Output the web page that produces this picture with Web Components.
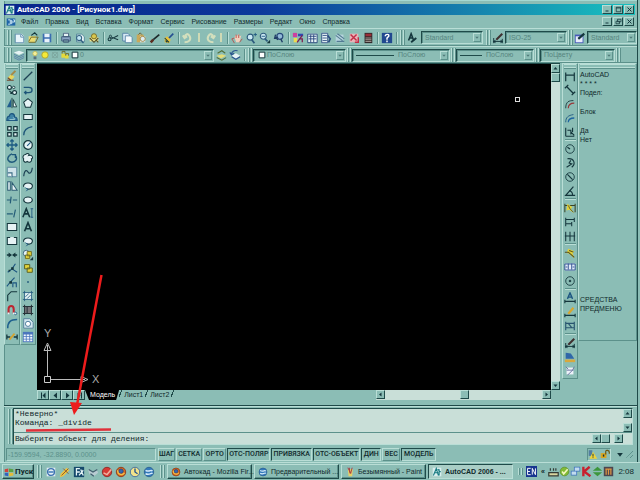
<!DOCTYPE html>
<html lang="ru">
<head>
<meta charset="utf-8">
<title>AutoCAD 2006 - [Рисунок1.dwg]</title>
<style>
  html, body { height: 100%; margin: 0; }
  body {
    --face: #8bbdb5; --light: #b9ded6; --dark: #1f4a49; --mid: #5c918b; --paper: #c9dfd8; --ink: #10292b;
    background: var(--face); color: var(--ink); overflow: hidden;
    font: 7px/10px "Liberation Sans", Arial, sans-serif;
  }
</style>
</head>
<body>
<cad-desktop></cad-desktop>
<script>
const K = '#14363c', B = '#1c5580', W = '#e6f3f5', Y = '#e2d23a';
const s = (d, c = K, w = 1, f = 'none') => `<path d="${d}" fill="${f}" stroke="${c}" stroke-width="${w}"/>`;
const f = (d, c) => `<path d="${d}" fill="${c}"/>`;
const c = (x, y, r, fill = 'none', st = K, w = 1) => `<circle cx="${x}" cy="${y}" r="${r}" fill="${fill}" stroke="${st}" stroke-width="${w}"/>`;
const page = s('M3 2.5h6l3 3v6H3z', '#4a7f94', 1, '#f2fafa');
const disc = (a, b, e) => c(7, 7, 5.5, a, b, 1) + e;
const ICONS = {
  app: f('M1 1h12v12H1z', '#d8eeee') + s('M2 12L6 2l3 10M3 8h6M10 3v9M8 3l4 4', '#167a80', 1.5),
  doc: f('M1 2h12v10H1z', '#1f65a8') + s('M3 4h3v6H3M8 4v6M10 4h2v3h-4', '#d8f0f8', 1.3),
  new: f('M3 2h7l3 3v8H3z', '#e9f5fb') + s('M2.5 2.5h7l3 3v7h-10z M9 3v3h3', '#5687a8'),
  open: f('M2 5h9l-2 7H2z', '#eadb72') + s('M2 11l3-5h8l-3 6H2', '#6b6422') + s('M5 4l4-3 3 3', K, 1.3),
  save: f('M2 2h10v10H2z', '#3b6db0') + f('M4 2h6v4H4zM4 8h6v4H4z', '#e8f2fa'),
  print: f('M4 1h6v5H4z', W) + f('M2 5h10v5H2z', '#8ba6c5') + s('M4 1.5h6v4H4zM2 5.5h10v5H2zM4 9h6v3H4z', '#3c5575'),
  preview: page + c(6, 7, 3, '#bfe6f4', '#315f80', 1.2) + s('M8 9l3 4', '#315f80', 1.6),
  publish: f('M2 6h10v5H2z', '#efe48a') + c(7, 5, 3, '#d9c850', '#72641f') + s('M2 7l5 5 5-5M9 9l3 3', '#54502a', 1.3),
  cut: s('M5 8L13 4M5 6l8 3', K, 1.2) + c(3, 8.5, 1.7, 'none', K, 1.2) + c(4, 5, 1.3, 'none', K, 1),
  copyclip: s('M2 1.5h6l2 2v7H2z', '#4f7ea3', 1, '#d6e9f5') + s('M5 4.5h6l2 2v6H5z', '#4f7ea3', 1, '#f4fafd'),
  paste: f('M2 3h8v9H2z', '#c9a95a') + s('M4 3l2-2 2 2', '#6c5220') + f('M6 5h6v7H6z', '#dcecf3') + c(9, 8, 3, 'none', '#a08238'),
  brush: s('M2 12l3-3', '#5b2d20', 3) + s('M5 9l7-6', '#1d2a2c', 2),
  brush2: f('M2 7l3-2 4 4-2 4-5-1z', '#e6c13a') + s('M7 7l5-5', '#264e90', 2) + s('M2 7l5 5M3 10l2 2', K, 1.2),
  undo: s('M3 12c5 0 8-3 6-7S4 2 3 6M1 4l2 3 3-2', '#d3dfbd', 2.4),
  redo: s('M11 12c-5 0-8-3-6-7s5-3 6 1M13 4l-2 3-3-2', '#d3dfbd', 2.4),
  pan: f('M4 6l2-3 1 2 2-3 1 3 2-1-2 8H6z', '#f1d0bd') + s('M4 13l-3-5 3-1M6 3v4M9 3v4M10 12l3-4', '#b84a45', 1),
  zoomrt: c(6, 6, 3.5, '#c9e8f2', '#2d5a7d', 1.3) + s('M8 9l3 4', '#2d5a7d', 2) + s('M10 3h4M12 1v4', B, 1),
  zoomwin: c(5, 5, 3.5, '#c9e8f2', '#2d5a7d', 1.3) + s('M7 8l3 3', '#2d5a7d', 2) + f('M13 9v4H9z', K) + s('M3 5h4', B),
  zoomprev: c(8, 5, 3.5, '#93bbd8', '#28497a', 1.4) + s('M9 8l2 4M2 6l4 3M3 3l-1 4 4-1', '#203c66', 1.6),
  props: f('M1 1h5v5H1z', '#cc3fa0') + f('M7 2h6v3H7z', '#3048b0') + f('M2 7h4v5H2z', '#ecdc50') + s('M6 12l6-8M8 8h4v4', '#802050', 1.5) ,
  dcenter: f('M2 2h11v10H2z', W) + s('M2 2.5h11v10H2zM3 5h9M3 8h9M5.5 3v9M9 3v9', '#24407a', 1),
  palettes: f('M2 1h7v12H2z', W) + s('M2 1.5h7v11H2zM3 4h5M3 7h5M3 10h5', '#27487f', 1) + s('M9 4l3 4-2 4', '#27487f', 1.8),
  sheets: f('M2 3h9v9H2z', '#b6d4de') + s('M2 4l8 6M4 2l8 6M3 11h9', '#537b92', 1.3),
  markup: f('M2 2h10v10H2z', '#e7b4b8') + s('M3 3l7 7M10 3l-7 7M8 12h4V6', '#c22d48', 1.7),
  calc: f('M3 1h9v12H3z', '#33292b') + f('M4 2h7v3H4z', '#9a2f38') + s('M4 7h7M4 9h7M4 11h7', '#b5aaa3', 1) ,
  help: f('M1 1h12v12H1z', '#20488f') + s('M5 5c0-3 5-3 4 0L7 7v2M7 10v2', '#fff', 1.7),
  style: s('M3 10L6 2l3 8M4 7h4', K, 1.8) + s('M6 12l6-5', K, 2.2),
  dimstyle: s('M2 7v6M12 8v5M2 11h10', K, 1.1) + s('M5 9l7-7', '#3f3030', 2.4) + f('M1 11l3-2v4zM13 11l-3-2v4z', K),
  tabstyle: f('M1 3h10v10H1z', '#4659b8') + f('M2 5h8v7H2z', '#e7ecfb') + s('M5 8l7-6', K, 2.6),
  layers: f('M1 4l6-2 6 2-6 3z', W) + s('M1 6l6 3 6-3M1 8l6 3 6-3M1 10l6 3 6-3', '#557fa6', 1),
  bulb: c(7, 5, 3, '#f2ee9b', '#c9bd4c') + f('M5 9h4v4H5z', '#58717a'),
  sun: c(7, 7, 4.5, '#f4ea38', '#a8a02c', 1.2),
  freeze: c(7, 7, 4, 'none', '#79a29a') + s('M3 3l8 8M11 3l-8 8', '#79a29a'),
  lock: f('M2 5h6v6H2zM7 7h5v5H7z', '#e4da3c') + s('M3 5V2h4v3M8 8V5h4v3', '#6c671f', 1.2),
  square: s('M3 3h8v8H3z', K, 1.4, '#fff'),
  layprev: f('M2 8l6-2 5 2-6 3z', '#e4dc78') + s('M2 10l6 3 5-3M3 5l5-3 4 3', '#506e38', 1.2),
  layback: f('M3 8l5-3 5 3-5 4z', W) + s('M3 9l5 3 5-3M10 2c-4-1-7 1-7 4M1 4l2 3 3-2', '#29558d', 1.4),
  erase: f('M2 9l4-4 4 3-4 4z', '#e9d55d') + s('M6 6l5-5', '#a58a48', 2.4) + s('M1 12h8M2 9l4 3', '#73472e', 1.2),
  copy: c(4, 4, 2.3, W, K, 1.3) + c(9, 4, 1.4, W) + c(10, 10, 2.3, W, K, 1.3) + s('M4 8l3 3M5 11h2V9', K, 1.2),
  mirror: f('M6 2v10H1z', '#215d8d') + s('M8.5 3v8.5h4z', K, 1, W) + s('M7 1v12', K, 1),
  offset: s('M1 11h12c0-3-2-4-3-4 0-5-6-5-6-1-2 0-3 2-3 5z', B, 1.4, '#3f84a7') + s('M4 10h6c0-2-1-2-2-2', '#a9d5dc', 1),
  array: s('M2 2h4v4H2zM9 2h4v4H9zM2 9h4v4H2zM9 9h4v4H9z', K, 1.4, W),
  move: s('M7 1v12M1 7h12M5 3l2-2 2 2M5 11l2 2 2-2M3 5L1 7l2 2M11 5l2 2-2 2', '#1c5b83', 1.5),
  rotate: s('M4 4c-4 4-1 8 3 8s7-4 4-8M7 3h4v4M4 4l3-2', '#1d587b', 1.6),
  scale: s('M1.5 1.5h11v11h-11z', '#4f7f96', 1, '#cfe3ea') + s('M2 8h5v5', '#3a6b84', 1.3, '#f4fafa'),
  stretch: s('M2 12V2h3v10zM7 3v9h6z', '#2d5c73', 1.2, W),
  trim: s('M1 7h4M6 3L5 11M8 7h5', '#255d78', 1.4), extend: s('M1 8h7M11 3l-2 9', '#255d78', 1.4),
  breakpt: s('M1.5 3h11v8h-11z', K, 1.2, W), break: s('M5 3H1.5v8h11V3H9', K, 1.2, W) + s('M5 3h4', W, 1),
  join: s('M1 7h4M9 7h4', K, 1.8) + f('M3 4l4 3-4 3zM11 4L7 7l4 3z', K),
  pl1: s('M2 12l5-4M7 8l4-6M7 8l6 4', B, 1.3) + f('M6 6h3v3H6zM3 9h2v2H3z', K),
  pl2: s('M1 12l4-5 5-5M8 13V8h4v5', B, 1.3) + f('M4 6h3v3H4z', K),
  chamfer: s('M2 13V6l4-4h7', K, 1.3), magnet: s('M3 11V6c0-5 6-5 6 0v5', '#bd2530', 2.4) + c(11, 11, 1.5, '#e9f2f2', B) + f('M2 10h2v2H2zM8 10h2v2H8z', W),
  fillet: s('M2 13c0-7 3-10 11-10', '#1e608e', 1.8), explode: s('M1 4v6M13 4v6M1 7h4M9 7h4', K, 1.5) + s('M4 10l6-7', '#d4a22d', 2),
  line: s('M2 12L12 2', '#1d4154', 1.5), pline: s('M2 4h6c5 0 5 6 0 6H3M5 8l-2 2 2 2', '#1d5478', 1.5),
  polygon: s('M7 2l5 4-2 6H4L2 6z', K, 1.2, W), rect: s('M2 4h10v6H2z', K, 1.2, W), arc: s('M2 12c0-6 4-9 10-10', '#1d5478', 1.5),
  circle: c(7, 7, 5, W, K, 1.4) + s('M6 8l4-4', B, 1.2), cloud: s('M4 3c3-3 5 0 4 1 5-1 5 4 3 4 1 4-3 5-5 3-2 2-5 0-4-3-2-2 0-5 2-5z', K, 1.2, W),
  spline: s('M2 12c1-9 4-7 5-5s4 3 5-5', '#1d4154', 1.4), ellipse: `<ellipse cx="7" cy="7" rx="5" ry="3.5" fill="${W}" stroke="${K}" stroke-width="1.4"/>`,
  ellarc: s('M2 8c-2-6 12-6 10 0-1 3-5 3-6 2', K, 1.3, W) + s('M4 9l3 2-2 2', B, 1.1),
  mtext: s('M1 12L5 2l4 10M2.5 8h5', K, 1.8) + s('M10 2h3M11.5 2v10M10 12h3', B, 1), text: s('M3 12L7 2l4 10M4 9h6', K, 1.9),
  block: c(5, 5, 3.5, W, '#315a71') + f('M6 3h5v5H6zM4 7h5v5H4z', Y) + s('M6 3h5v5H6zM4 7h5v4H4z', '#6b661f', 1) + f('M13 9v4H9z', K),
  block2: s('M3 3h6v5H3zM6 7h6v5H6z', '#59601f', 1.1, Y), point: f('M6 6h2v2H6z', '#1d5478'),
  hatch: f('M3 3h8v8H3z', W) + s('M3 1v12M11 1v12M1 3h12M1 11h12M4 8l4-4M6 10l4-4', '#235a80', 1), grad: f('M3 3h8v8H3z', '#77767b') + s('M3 1v12M11 1v12M1 3h12M1 11h12M6 3v8', '#263238', 1.2),
  region: s('M2 2h7l4 4v7H2z', '#4d7894', 1, '#d2e6ef') + c(7, 8, 3, '#fff', '#376c91'), table: f('M1 1h12v12H1z', '#4c76bd') + s('M2 5h10M2 8h10M2 11h10', '#f0f6fd', 2) + s('M5 3v9M9 3v9', '#4c76bd'),
  dlin: s('M2 3v10M12 3v10M2 6h10', K, 1.4), dali: s('M3 3l8 8M1 5l4-4M9 13l4-4', K, 1.5), darc: s('M2 12C2 4 6 3 11 3', K, 1) + s('M5 12c0-4 3-6 7-6', '#99383b', 1.4),
  djog: s('M2 12c0-6 3-8 9-9', B, 1) + s('M5 12c0-4 3-5 7-5', '#1e65a0', 1.5), dord: s('M2 2v10M2 12h10M4 5h4v5M8 7l4 4M10 2v5', K, 1.3),
  drad: c(7, 7, 5) + s('M7 7L4 5', K, 1.5), djr: s('M4 2c8-1 10 6 5 10M8 4L6 7l3 1-6 4', K, 1.3), ddia: c(7, 7, 5) + s('M4 4l6 6', K, 1.4), dang: s('M11 2L2 12h11M6 7c3 0 4 2 4 5', K, 1.4),
  quick: s('M1 2v10M13 2v10M1 4h12', '#3a4426', 1.2) + f('M4 2l6 4-2 2 4 5-6-4-3 1z', Y) + s('M5 4l2 4 4 4', '#524e22', 1), base: s('M2 2v10M2 4h10M2 9h7M12 2v5M9 7v5', K, 1.2), cont: s('M2 2v11M7 2v11M12 2v11M1 7h12', K, 1.2),
  leader: f('M5 2l7 3-2 2 2 6-6-5-3-1z', Y) + s('M1 6h4l7 6M6 4l5 2', '#524e22', 1.2), tol: f('M1 3h12v8H1z', '#e2ebf7') + s('M1 3.5h12v7H1zM5 3v7M9 3v7M2 7h2M10 7h2', '#315295', 1.1), center: c(7, 7, 5) + c(7, 7, 1, K),
  dedit: s('M4 8l3-7 3 7M5 6h4', B, 1.6) + s('M1 9v4M13 9v4M1 11h12', K, 1.3), dtedit: s('M5 9l6-7', '#d8a72f', 2.6) + s('M1 9v4M13 9v4M1 11h12', K, 1.3), dupd: s('M2 2v10M12 2v10M2 4h10M2 9h10M5 4l4 5', '#28556f', 1.3),
  layer3: f('M2 2l6 1 4 6H2z', '#2f67a8') + f('M1 10h12v3H1z', '#d7a83d'), dst: f('M3 3h8v8H3z', '#eef2fa') + s('M2 2l3 3M12 2l-2 4M4 12l6-6M3 6h8', '#68749f', 1.1),
  win: f('M1 3l5-1v5H1z', '#d0443c') + f('M7 2l6 1v4H7z', '#5aa346') + f('M1 8h5v5l-5-1z', '#3462bd') + f('M7 8h6v4l-6 1z', '#e4bd3a'),
  ie: f('M2 2h10v10H2z', '#e4eef6') + c(7, 7, 4, 'none', '#3c72b0', 1.6) + s('M4 7h6', '#2468b0', 1.5), pen: f('M2 9l7-7 3 3-7 7-4 1z', '#edc340') + s('M3 11l8-8M5 3l6 6', '#844f2a', 1), fl: f('M1 1h12v12H1z', '#15496b') + s('M4 11V3h4M4 7h4M9 4l3 7M7 11l5-6', '#e4f3f6', 1.5),
  cam: f('M1 4l6 2 4-2 2 4-5 4-5-2z', '#b8cbd2') + s('M2 4l5 3 5-3M4 9l4 3', '#41616f', 1.5), red: disc('#d63b35', '#8e2623', s('M3 8l4 2 5-6', '#f1b1a0', 1.8)), fox: disc('#d66a21', '#8b3514', c(7, 6, 2.5, '#3867ae', '#244987') + s('M3 5c0 6 6 6 8 3', '#f2c14a', 1.5)),
  clock: disc('#f2e38b', '#39649a', s('M7 3v4l3 2', '#26578c', 1.6)), globe: disc('#327abb', '#2b5f91', s('M3 5c5 3 6-2 8 1M3 9c5 2 7-2 8 0', '#d6eafa', 1.7)), paint: f('M4 3h7l-1 10H5z', '#e7d166') + s('M4 1l4 8M10 1L8 9M6 1l1 8', '#a63843', 1.3),
  lang: f('M0 0h14v14H0z', '#17358f') + s('M6 3H2v8h4M2 7h3M8 11V3l4 8V3', '#fff', 1.2), tray1: f('M1 8h12v5H1z', '#d9d6a0') + s('M1 8.5h12v4H1zM3 6v-3M7 6V3M10 6V3', '#333b35', 1.5), icq: disc('#83bb35', '#5e922d', s('M4 7l2 3 5-6', '#f3f7c0', 2)), net: f('M5 1h8v6H5zM1 6h8v6H1z', '#3d74ba') + f('M6 2h6v4H6zM2 7h6v4H2z', '#c1dbef'),
  kav: s('M3 1v12M11 1L4 7l8 6', '#c9202d', 3), updown: f('M1 6l6-5 6 5zM1 8h12l-6 5z', '#3d963c'), tray6: f('M1 1h12v12H1z', '#4c4650') + s('M3 4h8M4 4v7M10 4v7M7 4v7', '#e29640', 1.5),
  warn: f('M1 1h5v8H1z', '#527da0') + f('M7 3l6 10H2z', '#f0d338') + s('M7 6v4M7 11v1', K, 1.3), unlock: f('M1 5h8v7H1z', '#d8a722') + s('M8 7V3c0-3 5-2 5 1v2', '#6f5711', 1.7) + f('M4 7h2v3H4z', K),
  min: f('M3 9h6v2H3z', K), max: s('M2.5 2.5h9v9h-9zM2 4h10', K, 1.5), restore: s('M5 2.5h7v5H5zM2 6.5h7v5H2z', K, 1.5), close: s('M3 3l8 8M11 3l-8 8', K, 2),
  up: f('M3 9l4-5 4 5z', K), down: f('M3 5l4 5 4-5z', K), left: f('M9 3L4 7l5 4z', K), right: f('M5 3l5 4-5 4z', K), first: f('M11 1L5 7l6 6zM2 1h2v12H2z', K), last: f('M3 1l6 6-6 6zM10 1h2v12h-2z', K), prev: f('M10 1L3 7l7 6z', K), next: f('M4 1l7 6-7 6z', K)
};

const define = (name, css, html) => customElements.define(name, class extends HTMLElement {
  connectedCallback() {
    if (this.shadowRoot) return;
    const t = document.createElement('template');
    t.innerHTML = `<style>*{box-sizing:border-box} button{font:inherit;color:inherit;margin:0;padding:0;border:0;background:none;border-radius:0} ${css}</style>` + (typeof html === 'function' ? html(this) : html);
    this.attachShadow({ mode: 'open' }).append(t.content.cloneNode(true));
  }
});
const icon = n => `<svg viewBox="0 0 14 14" aria-hidden="true">${ICONS[n] || ''}</svg>`;
const tools = list => list.split(' ').map(n => n === '|' ? '<i class="sep"></i>' : n === 'v' ? '<i class="drop"></i>' : `<cad-tool name="${n}"></cad-tool>`).join('');

define('cad-icon', ':host{display:inline-flex;flex:none;width:11px;height:11px} svg{width:100%;height:100%}', e => icon(e.getAttribute('name')));
define('cad-tool', ':host{display:flex;flex:none;width:14px;height:14px} button{display:flex;width:100%;height:100%;align-items:center;justify-content:center} svg{flex:none;width:12px;height:12px}',
  e => `<button type="button" aria-label="${e.getAttribute('name')}">${icon(e.getAttribute('name'))}</button>`);
define('bevel-button', `:host{display:flex;flex:none;width:9px;height:9px} button{display:flex;width:100%;height:100%;align-items:center;justify-content:center;background:var(--face);border:1px solid;border-color:var(--light) var(--dark) var(--dark) var(--light)} svg{flex:none;width:7px;height:7px}`,
  e => `<button type="button" aria-label="${e.getAttribute('name')}">${icon(e.getAttribute('name'))}</button>`);
define('bar-grip', ':host{display:block;flex:none;width:4px;align-self:stretch;margin:1px 1px;border:solid var(--light);border-width:0 1px;box-shadow:1px 0 var(--mid),inset 1px 0 var(--mid)}', '');

define('title-bar', `:host{display:flex;align-items:center;height:11px;padding-right:1px;color:#fff;background:linear-gradient(90deg,#08258b 0%,#0b389b 40%,#1684ae 75%,#18c2c0 100%);font:bold 8px/10px Roboto,"Liberation Sans",sans-serif}
  cad-icon{margin:0 2px 0 1px;width:10px;height:10px} h1{font:inherit;margin:0;flex:1} div{display:flex;gap:1px;color:var(--ink)} bevel-button{width:10px}`,
  `<cad-icon name="app"></cad-icon><h1><slot></slot></h1><div><bevel-button name="min"></bevel-button><bevel-button name="max"></bevel-button><bevel-button name="close"></bevel-button></div>`);
define('menu-bar', `:host{display:flex;align-items:center;height:13px;padding:0 1px 0 2px} nav{display:flex;flex:1;gap:7px;padding-left:5px} div{display:flex;gap:1px} bevel-button{width:10px}
  cad-icon{width:10px;height:10px}`,
  `<cad-icon name="doc"></cad-icon><nav>${'Файл Правка Вид Вставка Формат Сервис Рисование Размеры Редакт Окно Справка'.split(' ').map(x => `<button type="button">${x}</button>`).join('')}</nav><div><bevel-button name="min"></bevel-button><bevel-button name="restore"></bevel-button><bevel-button name="close"></bevel-button></div>`);

define('combo-box', `:host{display:flex;flex:none;align-items:center;height:13px;border:1px solid;border-color:var(--dark) var(--light) var(--light) var(--dark);box-shadow:inset 1px 1px var(--mid);padding:1px 1px 1px 3px;color:#56857f}
  select{appearance:none;flex:1;min-width:0;height:10px;border:0;background:none;color:inherit;font:inherit;padding:0;margin:0} span{display:flex;width:8px;height:9px;border:1px solid;border-color:var(--light) var(--mid) var(--mid) var(--light)} svg{width:6px;height:7px;opacity:.5}`,
  e => `<slot></slot><select aria-label="${e.getAttribute('label')}"><option>${e.getAttribute('value')}</option></select><span>${icon('down')}</span>`);
const barCss = `:host{display:flex;align-items:center;height:18px;border-top:1px solid var(--light);box-shadow:inset 0 -1px var(--mid)} .sep{width:5px;height:12px;flex:none;background:linear-gradient(90deg,transparent 2px,var(--mid) 2px,var(--mid) 3px,var(--light) 3px,var(--light) 4px,transparent 4px)}
  .drop{width:8px;height:9px;flex:none;background:linear-gradient(90deg,transparent 3px,#cfdab5 3px,#cfdab5 5px,transparent 5px)}`;
define('standard-toolbar', barCss + `:host{padding-left:2px} combo-box{width:62px} .text{width:62px;margin:0 2px 0 2px} .fill{flex:1;min-width:50px}`,
  `<bar-grip></bar-grip>${tools('new open save | print preview publish | cut copyclip paste brush brush2 | undo v redo v | pan zoomrt zoomwin zoomprev | props dcenter palettes sheets markup calc | help')}<i class="sep"></i><bar-grip></bar-grip>${tools('style')}<combo-box class="text" label="Стиль текста" value="Standard"></combo-box><bar-grip></bar-grip>${tools('dimstyle')}<combo-box label="Размерный стиль" value="ISO-25"></combo-box><bar-grip></bar-grip>${tools('tabstyle')}<combo-box class="fill" label="Стиль таблиц" value="Standard"></combo-box>`);
define('layer-toolbar', barCss + `:host{padding-left:2px;height:17px} hr{flex:none;width:38px;margin:0 4px 0 0;border:0;border-top:1px solid var(--dark)} .short{width:22px} cad-icon{width:10px;height:10px} .l{width:188px} .c{width:93px} .t{width:98px} .w{width:78px} .p{width:75px}`,
  `<bar-grip></bar-grip>${tools('layers')}<combo-box class="l" label="Слой" value="0">${'bulb sun freeze lock square'.split(' ').map(n => `<cad-icon name="${n}"></cad-icon>`).join('')}</combo-box>${tools('layprev layback')}<i class="sep"></i><bar-grip></bar-grip>
   <combo-box class="c" label="Цвет" value="ПоСлою"><cad-icon name="square"></cad-icon></combo-box><bar-grip></bar-grip><combo-box class="t" label="Тип линии" value="ПоСлою"><hr></combo-box><bar-grip></bar-grip><combo-box class="w" label="Вес линии" value="ПоСлою"><hr class="short"></combo-box><bar-grip></bar-grip><combo-box class="p" label="Стиль печати" value="ПоЦвету"></combo-box><bar-grip></bar-grip>`);

define('tool-palette', `:host{display:block;flex:none;align-self:flex-start;width:16px;border:1px solid;border-color:var(--light) var(--mid) var(--mid) var(--light)}
  .grip{height:4px;margin:0 1px 1px;border:solid var(--light);border-width:1px 0;box-shadow:0 1px var(--mid)} .rows{display:grid;justify-items:center;align-items:center;grid-auto-rows:minmax(0,1fr);height:275px} .sep{width:11px;border-top:1px solid var(--mid);box-shadow:inset 0 1px var(--light)} .rows.auto{height:auto;grid-auto-rows:auto} .auto cad-tool{height:13px;margin-bottom:1px} .auto .sep{height:3px}`,
  e => `<div class="grip"></div><div class="rows ${e.hasAttribute('auto') ? 'auto' : ''}">${tools(e.getAttribute('tools'))}</div>`);

define('scroll-bar', `:host{display:flex;background:var(--paper)} :host([dir="v"]){flex-direction:column;width:9px} :host([dir="h"]){height:9px}
  .a{flex:var(--before,0)} .b{flex:var(--after,1)} .thumb{flex:none;width:9px;height:9px;background:var(--face);border:1px solid;border-color:var(--light) var(--dark) var(--dark) var(--light)} :host([plain]) .thumb{display:none}`,
  e => { const v = e.getAttribute('dir') === 'v'; return `<bevel-button name="${v ? 'up' : 'left'}"></bevel-button><i class="a"></i><i class="thumb"></i><i class="b"></i><bevel-button name="${v ? 'down' : 'right'}"></bevel-button>`; });

define('drawing-area', `:host{display:block;position:relative;background:#000;overflow:hidden} .ucs{position:absolute;left:4px;bottom:0;width:62px;height:62px} .pick{position:absolute;left:93%;top:10%;width:5px;height:5px;border:1px solid #ddd} text{font:11px "Liberation Sans",sans-serif;fill:#aaa}`,
  `<svg class="ucs" viewBox="0 0 62 62"><path d="M6.5 48.5V17M9 51.500h35M3 22.500h7L6.500 15zM40 48.500v6l7-3z" fill="none" stroke="#bbb"/><path d="M3.5 48.5h6v6h-6z" fill="#000" stroke="#ccc"/><text x="3" y="9">Y</text><text x="51" y="55">X</text></svg><i class="pick"></i>`);

define('sheet-tabs', `:host{display:flex;flex:none;height:10px;background:var(--face)} .nav{width:12px;height:10px} .tabs{display:flex;flex:1} button{padding:0 2px 0 5px;line-height:10px} button+button,.end{background:linear-gradient(110deg,transparent 2px,var(--dark) 2px,var(--dark) 3px,transparent 3px)} .end{width:6px} button[aria-selected=true]{background:#000;color:#fff;padding:0 4px 0 5px;clip-path:polygon(0 0,100% 0,calc(100% - 3px) 100%,4px 100%)} scroll-bar{flex:none;width:175px;height:10px;--before:75;--after:73}`,
  `${'first prev next last'.split(' ').map(n => `<bevel-button class="nav" name="${n}"></bevel-button>`).join('')}<div class="tabs" role="tablist"><button role="tab" aria-selected="true">Модель</button><button role="tab">Лист1</button><button role="tab">Лист2</button><i class="end"></i></div><scroll-bar dir="h"></scroll-bar>`);

define('screen-menu', `:host{display:flex;flex-direction:column;flex:1;border:1px solid;border-color:var(--light) var(--mid) var(--mid) var(--light);height:278px;line-height:9px;min-width:0} .grip{height:4px;border:solid var(--light);border-width:1px 0;box-shadow:0 1px var(--mid);margin:0 1px 2px} button{display:block;text-align:left;line-height:9px;padding-left:1px} .gap{margin-top:10px} .low{margin:auto 0 27px}`,
  `<div class="grip"></div><button>AutoCAD</button><button>* * * *</button><button>Подел:</button><button class="gap">Блок</button><button class="gap">Да</button><button>Нет</button><div class="low"><button>СРЕДСТВА</button><button>ПРЕДМЕНЮ</button></div>`);

define('work-area', `:host{display:flex;flex:1;min-height:0} .view{flex:1;min-width:0;display:flex;flex-direction:column;margin:0 0 5px 1px;border-top:1px solid var(--dark)} .row{display:flex;flex:1;min-height:0} drawing-area{flex:1} .right{display:flex;width:77px;flex:none;padding-left:2px;gap:0} .foot{display:flex} sheet-tabs{flex:1} .corner{width:9px}`,
  `<tool-palette tools="erase copy mirror offset array move rotate scale stretch trim extend breakpt break join pl1 pl2 chamfer magnet fillet explode"></tool-palette><tool-palette tools="line pline polygon rect arc circle cloud spline ellarc ellipse mtext text ellarc block block2 point hatch grad region table"></tool-palette>
  <div class="view"><div class="row"><drawing-area></drawing-area><scroll-bar dir="v"></scroll-bar></div><div class="foot"><sheet-tabs></sheet-tabs><i class="corner"></i></div></div>
  <div class="right"><tool-palette auto tools="dlin dali darc djog dord | drad djr ddia dang | quick base cont | leader tol center | dedit dtedit dupd | dimstyle layer3 dst"></tool-palette><screen-menu></screen-menu></div>`);

define('command-window', `:host{display:flex;border-top:1px solid var(--dark);padding:2px 4px 1px 3px;box-shadow:inset 0 1px var(--light)} .box{flex:1;border:1px solid;border-color:var(--dark) var(--light) var(--light) var(--dark);background:var(--paper)} .hist,.entry{display:flex;font:8px/9px "Liberation Mono","Courier New",monospace} .hist{height:24px;border-bottom:1px solid var(--mid)} .hist div{flex:1} p{margin:0 0 0 1px} .entry{height:11px;align-items:center} input{flex:1;min-width:0;border:0;padding:0 0 0 1px;margin:0;background:none;font:inherit;color:inherit;height:10px} .entry scroll-bar{width:31px;margin-right:9px;--before:0;--after:1} .hist scroll-bar{background:var(--paper)}`,
  `<bar-grip></bar-grip><div class="box"><div class="hist"><div><p>*Неверно*</p><p>Команда: _divide</p></div><scroll-bar dir="v" plain></scroll-bar></div><div class="entry"><input aria-label="Командная строка" value="Выберите объект для деления:"><scroll-bar dir="h"></scroll-bar></div></div>`);

define('status-bar', `:host{display:flex;align-items:center;height:16px;padding:0 4px 0 2px;gap:1px} .xy{width:150px;color:var(--mid);border:1px solid;border-color:var(--mid) var(--light) var(--light) var(--mid);height:13px;line-height:11px;padding-left:1px;margin-right:1px} button{height:13px;border:1px solid;border-color:var(--light) var(--mid) var(--mid) var(--light);white-space:nowrap;text-align:center;font-family:Roboto,"Liberation Sans",sans-serif;font-weight:500} button[aria-pressed=true]{border-color:var(--dark) var(--light) var(--light) var(--dark)} .space{flex:1} .tray{display:flex;gap:2px;border:1px solid;border-color:var(--mid) var(--light) var(--light) var(--mid);margin-right:3px} cad-icon{width:10px} .size{width:7px;height:8px;background:repeating-linear-gradient(135deg,transparent 0 2px,var(--mid) 2px 3px);clip-path:polygon(100% 0,100% 100%,0 100%)}`,
  `<span class="xy">-159.9594, -32.8890, 0.0000</span>${[['ШАГ',17,0],['СЕТКА',26,0],['ОРТО',23,0],['ОТС-ПОЛЯР',43,1],['ПРИВЯЗКА',41,1],['ОТС-ОБЪЕКТ',47,1],['ДИН',20,1],['ВЕС',18,0],['МОДЕЛЬ',35,1]].map(([t, w, p]) => `<button type="button" aria-pressed="${!!p}" style="min-width:${w}px">${t}</button>`).join('')}<span class="space"></span><span class="tray"><cad-icon name="warn"></cad-icon><cad-icon name="unlock"></cad-icon></span><cad-icon name="down"></cad-icon><i class="size"></i>`);

define('task-button', `:host{display:block;flex:none;width:85px} button{display:flex;align-items:center;gap:3px;width:100%;height:15px;padding:0 3px;border:1px solid;border-color:var(--light) var(--dark) var(--dark) var(--light);box-shadow:inset -1px -1px var(--mid);white-space:nowrap} :host([active]) button{background:#a9cec6;border-color:var(--dark) var(--light) var(--light) var(--dark);box-shadow:none;font-weight:bold} :host(.start){width:32px;font-weight:bold} :host(.start) button{padding:0 1px;gap:1px} cad-icon{width:10px;height:10px}`,
  e => `<button type="button"><cad-icon name="${e.getAttribute('icon')}"></cad-icon><span><slot></slot></span></button>`);
define('task-bar', `:host{display:flex;align-items:center;height:18px;border-top:1px solid var(--light);padding:0 6px 0 2px;gap:2px} .quick{display:flex;padding:0 1px 0 0} bar-grip{margin:2px 1px} .start{font-family:Roboto,"Liberation Sans",sans-serif;font-size:8px} .space{flex:1} .tray{display:flex;align-items:center} time{padding-left:4px;font-size:8px} .tray bar-grip{margin-right:4px}.tray span{width:11px;text-align:center;font-weight:bold}`,
  `<task-button class="start" icon="win">Пуск</task-button><bar-grip></bar-grip><div class="quick">${tools('ie pen fl cam red fox clock globe')}</div><bar-grip></bar-grip><task-button icon="fox">Автокад - Mozilla Fir...</task-button><task-button icon="globe">Предварительный ...</task-button><task-button icon="paint">Безымянный - Paint</task-button><task-button icon="app" active>AutoCAD 2006 - ...</task-button><i class="space"></i><div class="tray"><bar-grip></bar-grip><cad-icon name="lang"></cad-icon><span>«</span>${'tray1 icq net kav updown tray6'.split(' ').map(n => `<cad-icon name="${n}"></cad-icon>`).join('')}<time>2:08</time></div>`);

define('red-marks', ':host{position:absolute;inset:0;pointer-events:none} svg{display:block;width:100%;height:100%}',
  `<svg viewBox="0 0 640 480" preserveAspectRatio="none" fill="none" stroke="#ed1c1c"><path d="M101.500 275L77 405" stroke-width="2.500"/><path d="M70 402l12 1-8 12z" fill="#ed1c1c" stroke="none"/><path d="M26 430.500l85-1" stroke="#e0303a" stroke-width="2.500"/></svg>`);

define('cad-desktop', `:host{display:flex;flex-direction:column;height:100vh;position:relative;background:var(--face)} main{display:flex;flex-direction:column;flex:1;min-height:0;padding-top:4px;border-left:4px solid #a9d3cb;border-right:1px solid var(--dark);margin-right:2px;box-shadow:inset 0 1px #a5d8d2,inset 1px 0 var(--mid)} title-bar,menu-bar{margin-right:2px}`,
  `<main><title-bar>AutoCAD 2006 - [Рисунок1.dwg]</title-bar><menu-bar></menu-bar><standard-toolbar></standard-toolbar><layer-toolbar></layer-toolbar><work-area></work-area><command-window></command-window><status-bar></status-bar></main><task-bar></task-bar><red-marks></red-marks>`);
</script>
</body>
</html>
